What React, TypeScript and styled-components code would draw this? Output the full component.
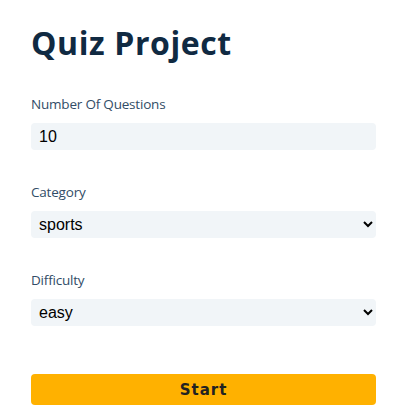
import React from "react";
import styled, { createGlobalStyle } from "styled-components";

const Global = createGlobalStyle`
  * { box-sizing: border-box; }
  html, body { margin: 0; padding: 0; background: #fff; }
  body {
    font-family: "Open Sans", "Noto Sans", sans-serif;
    font-size: 14px;
    line-height: 1.5;
    color: #102a42;
  }
`;

const Section = styled.section`
  padding: 23px 39px 0 31px;
`;

const Form = styled.form`
  display: flex;
  flex-direction: column;
`;

const Title = styled.h2`
  margin: 0 0 31px;
  font-family: "Open Sans", "Noto Sans", sans-serif;
  font-size: 32px;
  line-height: 1.25;
  font-weight: 700;
  letter-spacing: 0.6px;
  color: #102a42;
`;

const Field = styled.div`
  display: flex;
  flex-direction: column;
  margin-bottom: 32px;
`;

const Label = styled.label`
  display: block;
  font-size: 13.5px;
  line-height: 21px;
  letter-spacing: -0.2px;
  color: #324d67;
  margin-bottom: 8px;
`;

const Input = styled.input`
  width: 100%;
  height: 27px;
  border: none;
  border-radius: 4px;
  background: #f1f5f8;
  padding: 4px 8px;
  font-family: "Liberation Sans", Arial, sans-serif;
  font-size: 16px;
  color: #000;
  outline: none;
`;

const Select = styled.select`
  width: 100%;
  height: 27px;
  border: none;
  border-radius: 4px;
  background: #f1f5f8;
  padding: 4px 9px 4px 4px;
  font-family: "Liberation Sans", Arial, sans-serif;
  font-size: 16px;
  color: #000;
  outline: none;
`;

const Button = styled.button`
  margin-top: 16px;
  width: 100%;
  height: 31px;
  border: none;
  border-radius: 4px;
  background: #ffb100;
  font-family: "DejaVu Sans", Verdana, sans-serif;
  font-size: 15px;
  font-weight: 700;
  letter-spacing: 1px;
  color: #222;
  cursor: pointer;
`;

export default function App() {
  return (
    <>
      <Global />
      <Section>
        <Form onSubmit={(e) => e.preventDefault()}>
          <Title>Quiz Project</Title>
          <Field>
            <Label htmlFor="amount">Number Of Questions</Label>
            <Input id="amount" type="number" defaultValue={10} min={1} max={50} />
          </Field>
          <Field>
            <Label htmlFor="category">Category</Label>
            <Select id="category" defaultValue="sports">
              <option value="sports">sports</option>
              <option value="history">history</option>
              <option value="politics">politics</option>
            </Select>
          </Field>
          <Field>
            <Label htmlFor="difficulty">Difficulty</Label>
            <Select id="difficulty" defaultValue="easy">
              <option value="easy">easy</option>
              <option value="medium">medium</option>
              <option value="hard">hard</option>
            </Select>
          </Field>
          <Button type="submit">Start</Button>
        </Form>
      </Section>
    </>
  );
}
